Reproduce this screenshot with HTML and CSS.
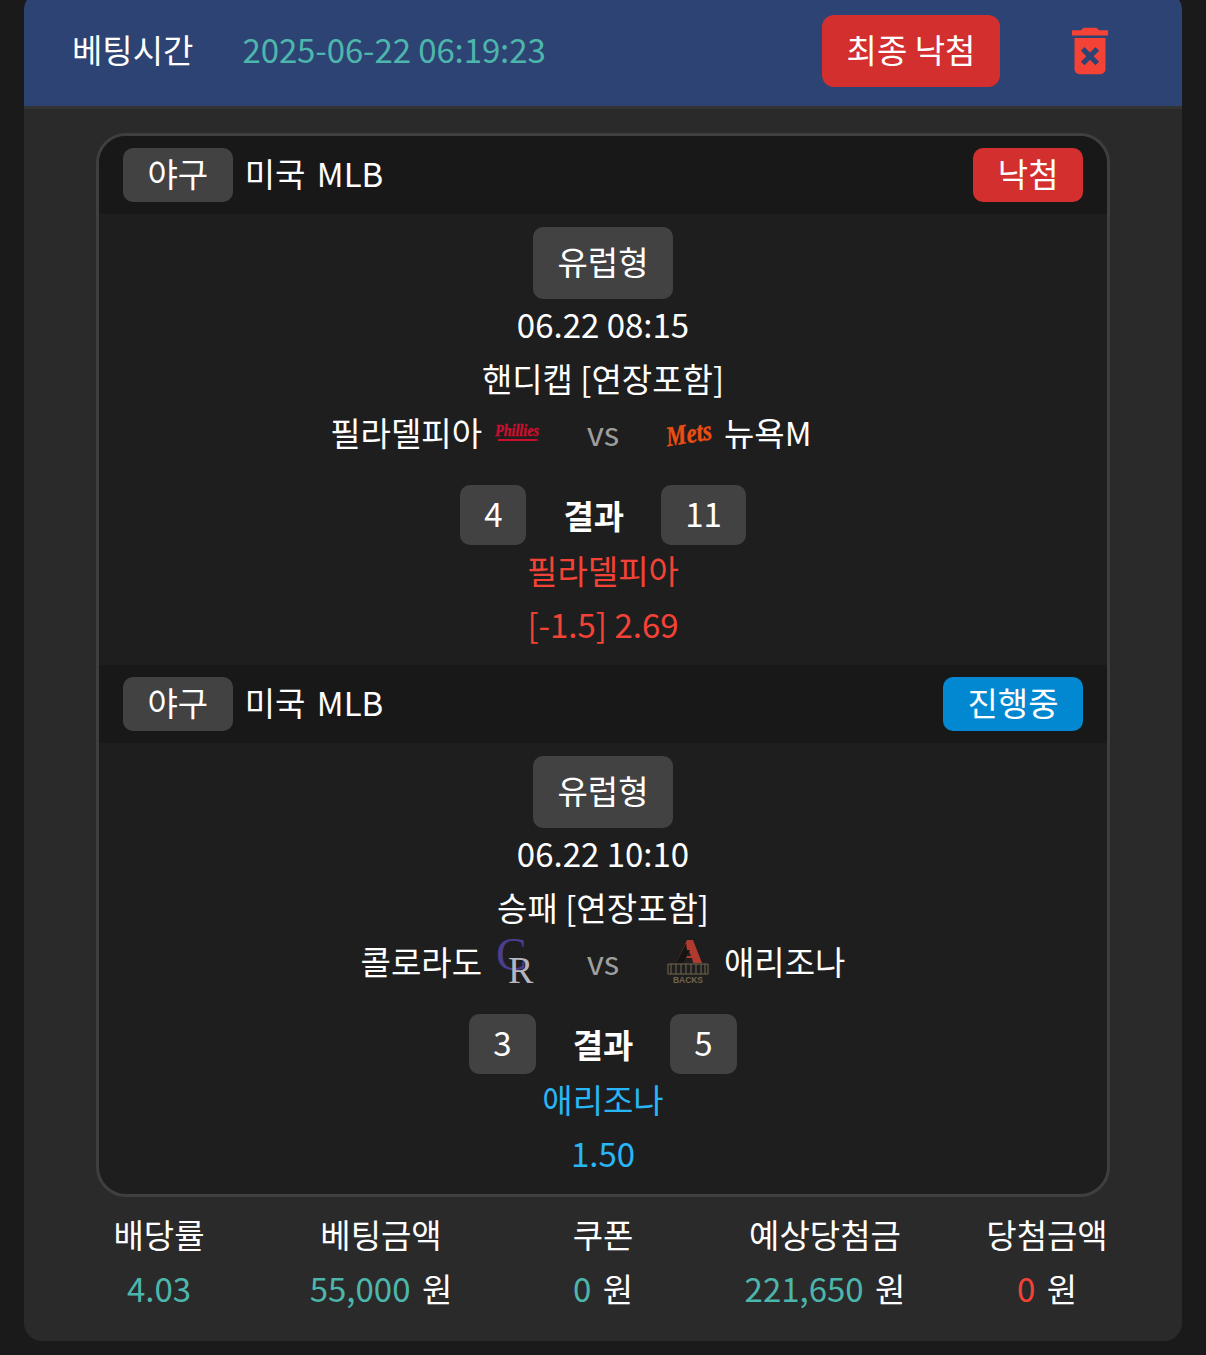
FILE: index.html
```html
<!DOCTYPE html>
<html>
<head>
    <meta charset="UTF-8">
    <title>베팅내역</title>
    <link rel="stylesheet" href="styles.css">
</head>
<body>
    <div class="bet-card">
        <div class="bet-head">
            <span class="bet-label">베팅시간</span>
            <span class="bet-date">2025-06-22 06:19:23</span>
            <button class="final-btn">최종 낙첨</button>
            <svg class="trash" viewBox="0 0 24 24"><path fill-rule="evenodd" d="M6 19c0 1.1.9 2 2 2h8c1.1 0 2-.9 2-2V7H6v12zm2.46-7.12l1.41-1.41L12 12.59l2.12-2.12 1.41 1.41L13.41 14l2.12 2.12-1.41 1.41L12 15.41l-2.12 2.12-1.41-1.41L10.59 14l-2.13-2.12zM15.5 4l-1-1h-5l-1 1H5v2h14V4z"/></svg>
        </div>

        <div class="game-list">
            <!-- first game -->
            <div class="game-top">
                <span class="tag">야구</span>
                <span class="league">미국 MLB</span>
                <span class="status lost">낙첨</span>
            </div>
            <div class="game-body">
                <div class="type-tag">유럽형</div>
                <div class="line time">06.22 08:15</div>
                <div class="line">핸디캡 [연장포함]</div>
                <div class="teams">
                    <div class="team home">
                        <span>필라델피아</span>
                        <svg class="logo" viewBox="0 0 45 45">
                            <text class="phillies" x="0" y="26" textLength="44" lengthAdjust="spacingAndGlyphs">Phillies</text>
                            <path class="phillies-line" d="M3 29h38l3 1-3 1H3z"/>
                        </svg>
                    </div>
                    <div class="vs">vs</div>
                    <div class="team">
                        <svg class="logo" viewBox="0 0 45 45">
                            <text class="mets" x="0" y="33" textLength="46" lengthAdjust="spacingAndGlyphs" transform="rotate(-9 22 25)">Mets</text>
                        </svg>
                        <span>뉴욕M</span>
                    </div>
                </div>
                <div class="score-row">
                    <span class="score">4</span>
                    <b class="score-title">결과</b>
                    <span class="score">11</span>
                </div>
                <div class="line red">필라델피아</div>
                <div class="line odds red">[-1.5] 2.69</div>
            </div>

            <!-- second game -->
            <div class="game-top">
                <span class="tag">야구</span>
                <span class="league">미국 MLB</span>
                <span class="status live">진행중</span>
            </div>
            <div class="game-body last">
                <div class="type-tag">유럽형</div>
                <div class="line time">06.22 10:10</div>
                <div class="line">승패 [연장포함]</div>
                <div class="teams">
                    <div class="team home">
                        <span>콜로라도</span>
                        <svg class="logo" viewBox="0 0 45 45">
                            <text x="1" y="31"><tspan class="rockies-c">C</tspan><tspan class="rockies-r" x="13" y="44">R</tspan></text>
                        </svg>
                    </div>
                    <div class="vs">vs</div>
                    <div class="team">
                        <svg class="logo" viewBox="0 0 45 45">
                            <path fill="#b03a2e" d="M21 1h6l9 23h-9l-1-5h-6l-2 5h-8z"/>
                            <path fill="#141414" d="M20 4l-10 20h8l2-5 4-8h-3z"/>
                            <path fill="#1e1e1e" d="M23 12l2 5h-4z"/>
                            <path fill="none" stroke="#74664f" stroke-width="1" d="M2 25h40M2 35h40M2 25v10M5 25v10M10 25v10M15 25v10M20 25v10M25 25v10M30 25v10M35 25v10M39 25v10M42 25v10"/>
                            <text class="dbacks" x="22" y="44" textLength="30" lengthAdjust="spacingAndGlyphs" text-anchor="middle">BACKS</text>
                        </svg>
                        <span>애리조나</span>
                    </div>
                </div>
                <div class="score-row">
                    <span class="score">3</span>
                    <b class="score-title">결과</b>
                    <span class="score">5</span>
                </div>
                <div class="line blue">애리조나</div>
                <div class="line odds blue">1.50</div>
            </div>
        </div>

        <div class="summary">
            <div class="cell"><div>배당률</div><div class="amount"><em>4.03</em></div></div>
            <div class="cell"><div>베팅금액</div><div class="amount"><em>55,000</em> <span class="won">원</span></div></div>
            <div class="cell"><div>쿠폰</div><div class="amount"><em>0</em> <span class="won">원</span></div></div>
            <div class="cell"><div>예상당첨금</div><div class="amount"><em>221,650</em> <span class="won">원</span></div></div>
            <div class="cell"><div>당첨금액</div><div class="amount"><em class="zero">0</em> <span class="won">원</span></div></div>
        </div>
    </div>
</body>
</html>
```
FILE: styles.css
```css
* {
    box-sizing: border-box;
}

body {
    margin: 0;
    background: #1a1a1a;
    color: #fff;
    font-family: "Noto Sans CJK KR", "Noto Sans", sans-serif;
    font-size: 33px;
    font-variant-ligatures: no-contextual;
    font-feature-settings: "calt" 0;
    line-height: 53px;
    overflow: hidden;
}

.bet-card {
    margin: -8px 24px 14px;
    height: 1349px;
    background: #2a2a2a;
    border-radius: 18px;
    overflow: hidden;
}

/* Header */
.bet-head {
    display: flex;
    align-items: center;
    height: 117px;
    padding: 9px 61px 6px 48px;
    background: #2d4373;
    border-bottom: 3px solid #333;
}

.bet-label,
.bet-date {
    line-height: 51px;
    height: 53px;
}

.bet-date {
    margin-left: 49px;
    color: #4db6ac;
    letter-spacing: -0.1px;
}

.final-btn {
    width: 178px;
    height: 72px;
    margin-left: auto;
    padding: 0 0 2px;
    border: none;
    border-radius: 12px;
    background: #d32f2f;
    color: #fff;
    font: inherit;
}

.trash {
    width: 62px;
    height: 62px;
    margin-left: 59px;
    fill: #f44336;
}

/* Game list */
.game-list {
    margin: 24px 72px 0;
    border: 3px solid #3f3f3f;
    border-radius: 30px;
    overflow: hidden;
    background: #1e1e1e;
}

.game-top {
    display: flex;
    align-items: center;
    height: 78px;
    padding: 0 24px;
    background: #181818;
}

.tag,
.status {
    height: 54px;
    padding: 0 24.5px;
    border-radius: 10px;
    background: #424242;
    line-height: 50px;
    text-align: center;
}

.league {
    margin-left: 12px;
    line-height: 51px;
    height: 54px;
    word-spacing: 4px;
}

.status {
    margin-left: auto;
}

.lost {
    background: #d32f2f;
}

.live {
    background: #0288d1;
}

.game-body {
    padding: 13px 0 13px;
    text-align: center;
}

.type-tag {
    width: 140px;
    height: 72px;
    margin: 0 auto;
    border-radius: 10px;
    background: #424242;
    line-height: 68px;
}

.time {
    height: 53px;
    line-height: 51px;
}

.teams {
    display: flex;
    align-items: center;
    justify-content: center;
    height: 54px;
    margin-bottom: 26px;
}

.team {
    display: flex;
    flex: 1;
    align-items: center;
    gap: 13px;
}

.team.home {
    justify-content: flex-end;
}

.vs {
    width: 126px;
    color: #9e9e9e;
    line-height: 54px;
}

.logo {
    flex: none;
    width: 45px;
    height: 45px;
    overflow: visible;
}

.phillies {
    fill: #c8102e;
    stroke: #c8102e;
    stroke-width: 0.4px;
    font: italic bold 17px "Liberation Serif", serif;
}

.phillies-line {
    fill: #c8102e;
}

.mets {
    fill: #ec4e12;
    stroke: #ec4e12;
    stroke-width: 0.4px;
    font: italic bold 28px "Liberation Serif", serif;
}

.rockies-c {
    fill: #4a3f8f;
    font: 46px "Liberation Serif", serif;
}

.rockies-r {
    fill: #b5b5c0;
    font: 38px "Liberation Serif", serif;
}

.dbacks {
    fill: #74664f;
    font: bold 9px "Liberation Sans", sans-serif;
}

.score-row {
    display: flex;
    align-items: center;
    justify-content: center;
    gap: 37px;
    height: 60px;
    margin-bottom: -1px;
}

.score {
    height: 60px;
    padding: 0 24px;
    border-radius: 10px;
    background: #424242;
    line-height: 56px;
}

.score-title {
    font-weight: 700;
    line-height: 56px;
}

.odds {
    height: 55px;
    line-height: 54px;
}

.red {
    color: #f44336;
}

.blue {
    color: #29b6f6;
}

/* Bottom totals */
.summary {
    display: grid;
    grid-template-columns: repeat(5, 1fr);
    padding: 11px 24px 0;
    text-align: center;
}

.cell {
    display: flex;
    flex-direction: column;
    gap: 1px;
}

.amount em {
    color: #4db6ac;
    font-style: normal;
}

.amount em.zero {
    color: #f44336;
}

.won {
    margin-left: 4px;
}
```
